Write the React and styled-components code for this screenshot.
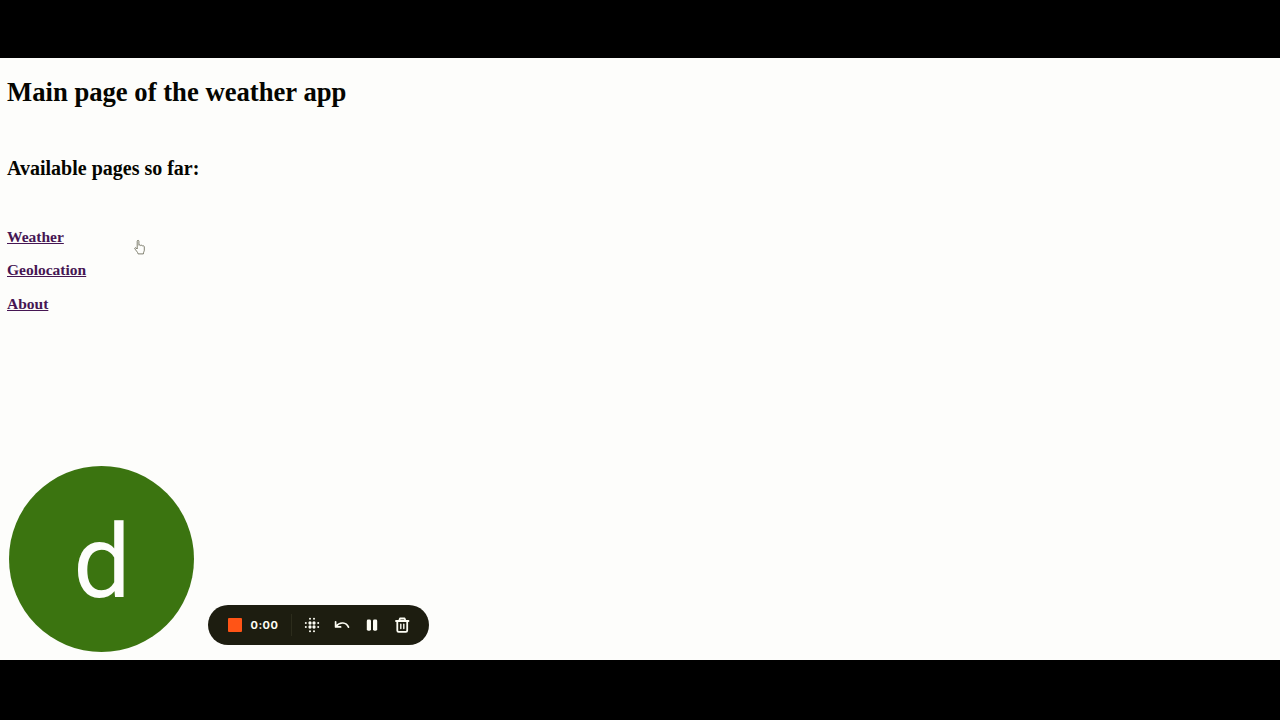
import React from "react";
import styled, { createGlobalStyle } from "styled-components";

const GlobalStyle = createGlobalStyle`
  * { box-sizing: border-box; }
  body { margin: 0; background: #000; }
`;

const Screen = styled.div`
  width: 1280px;
  height: 720px;
  padding: 58px 0 60px;
  background: #000;
  overflow: hidden;
`;

const Page = styled.main`
  height: 602px;
  padding: 18px 7px 8px;
  display: flex;
  flex-direction: column;
  background: #fdfdfb;
  color: #050500;
  font-family: "Liberation Serif", "Times New Roman", serif;
  position: relative;
`;

const Title = styled.h1`
  margin: 0;
  font-size: 26.67px;
  line-height: 32px;
`;

const Subtitle = styled.h2`
  margin: 48px 0 0;
  font-size: 20px;
  line-height: 24px;
`;

const Links = styled.nav`
  margin-top: 47.6px;
  display: flex;
  flex-direction: column;
  align-items: flex-start;
  gap: 15.7px;
`;

const PageLink = styled.a`
  color: #461653;
  font-size: 15.5px;
  font-weight: bold;
  line-height: 18px;
  text-decoration: underline;
`;

const Recorder = styled.div`
  margin-top: auto;
  display: flex;
  align-items: flex-end;
  gap: 14px;
  padding-left: 1.5px;
`;

const Avatar = styled.div`
  width: 185px;
  height: 186px;
  padding: 6px 0 0 2px;
  border-radius: 50%;
  display: flex;
  align-items: center;
  justify-content: center;
  background: #3b7410;
  color: #fdfdfb;
  font: 102px/1 Roboto, sans-serif;
`;

const Controls = styled.div`
  width: 221px;
  height: 40px;
  margin-bottom: 7px;
  padding-left: 20px;
  border-radius: 20px;
  display: flex;
  align-items: center;
  background: #1d1d10;
  color: #fdfdf4;
`;

const Stop = styled.button`
  width: 14px;
  height: 14px;
  padding: 0;
  border: 0;
  border-radius: 1px;
  background: #ff5416;
`;

const Time = styled.span`
  width: 31px;
  margin-left: 9px;
  font: 700 11px/14px Inter, sans-serif;
  letter-spacing: 0.5px;
  white-space: nowrap;
`;

const Divider = styled.span`
  width: 1px;
  height: 22px;
  margin: 0 10px 0 9px;
  background: #2c2c1c;
`;

const Tools = styled.div`
  display: flex;
  gap: 10px;
`;

const Tool = styled.button`
  width: 20px;
  height: 20px;
  padding: 0;
  border: 0;
  background: none;
  color: inherit;
  svg { display: block; }
`;

const Pointer = styled.svg`
  position: absolute;
  left: 133px;
  top: 181px;
`;

const icon = { width: 20, height: 20, viewBox: "0 0 20 20", fill: "none", stroke: "currentColor" };

const BlurIcon = () => (
  <svg {...icon} stroke="none" fill="currentColor">
    {[3.8, 8, 12, 16.2].map((y, row) =>
      [3.8, 8, 12, 16.2].map((x, col) => {
        const outerRow = row % 3 === 0;
        const outerCol = col % 3 === 0;
        if (outerRow && outerCol) return null;
        return <circle key={`${row}${col}`} cx={x} cy={y} r={outerRow || outerCol ? 1 : 1.65} />;
      })
    )}
  </svg>
);

const UndoIcon = () => (
  <svg {...icon} strokeWidth="1.7" strokeLinecap="round" strokeLinejoin="round">
    <path d="M3.6 6.8v5.1h5M4 11.4C8 6.3 14.3 7.2 16.5 12.2" />
  </svg>
);

const PauseIcon = () => (
  <svg {...icon} stroke="none" fill="currentColor">
    <rect x="4.8" y="4.5" width="4.2" height="11.2" rx="1.4" />
    <rect x="11" y="4.5" width="4.2" height="11.2" rx="1.4" />
  </svg>
);

const TrashIcon = () => (
  <svg {...icon} strokeWidth="1.8" strokeLinecap="round" strokeLinejoin="round">
    <path d="M4 6h12.5M7.2 5.7 8 3.5h4.6l.8 2.2M5.3 6.3v9.2c0 .8.5 1.3 1.3 1.3h7.3c.8 0 1.3-.5 1.3-1.3V6.3" />
    <path strokeWidth="1.4" d="M8.8 9.2v4.4M11.8 9.2v4.4" />
  </svg>
);

export default function App() {
  return (
    <>
      <GlobalStyle />
      <Screen>
        <Page>
          <Title>Main page of the weather app</Title>
          <Subtitle>Available pages so far:</Subtitle>
          <Links>
            <PageLink href="#weather">Weather</PageLink>
            <PageLink href="#geolocation">Geolocation</PageLink>
            <PageLink href="#about">About</PageLink>
          </Links>
          <Recorder>
            <Avatar>d</Avatar>
            <Controls>
              <Stop aria-label="Stop" />
              <Time>0:00</Time>
              <Divider />
              <Tools>
                <Tool aria-label="Blur"><BlurIcon /></Tool>
                <Tool aria-label="Restart"><UndoIcon /></Tool>
                <Tool aria-label="Pause"><PauseIcon /></Tool>
                <Tool aria-label="Delete"><TrashIcon /></Tool>
              </Tools>
            </Controls>
          </Recorder>
          <Pointer width="14" height="17" viewBox="0 0 14 17" fill="#fdfdfb" stroke="#62624e" strokeWidth="0.8" strokeLinejoin="round">
            <path d="M4.2 10V2.2c0-1.2 1.7-1.2 1.7 0v4.1c.5-.7 1.6-.5 1.8.3.5-.6 1.6-.4 1.8.4.6-.5 1.8-.1 1.8.8v3.4c0 1.2-.9 1.9-.9 3.7H5.1c-.3-1.9-2.6-3.7-3.3-5.3-.3-.9.8-1.3 1.4-.6z" />
          </Pointer>
        </Page>
      </Screen>
    </>
  );
}
